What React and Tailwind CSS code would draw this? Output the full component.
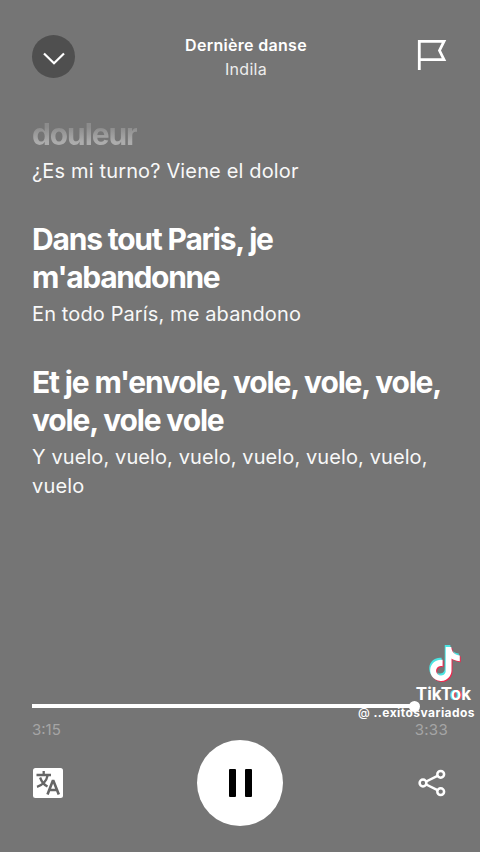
import { SiTiktok } from 'react-icons/si';

const LYRICS = [
  {
    lines: [{ text: 'douleur', spacing: 'tracking-[-1.1px]' }],
    translation: [{ text: '¿Es mi turno? Viene el dolor', spacing: 'tracking-[0.15px]' }],
    past: true,
  },
  {
    lines: [
      { text: 'Dans tout Paris, je', spacing: 'tracking-[-1.2px]' },
      { text: "m'abandonne", spacing: 'tracking-[-1.35px]' },
    ],
    translation: [{ text: 'En todo París, me abandono', spacing: 'tracking-[0.12px]' }],
  },
  {
    lines: [
      { text: "Et je m'envole, vole, vole, vole,", spacing: 'tracking-[-1.17px]' },
      { text: 'vole, vole vole', spacing: 'tracking-[-1.15px]' },
    ],
    translation: [
      { text: 'Y vuelo, vuelo, vuelo, vuelo, vuelo, vuelo,', spacing: 'tracking-[0.1px]' },
      { text: 'vuelo', spacing: 'tracking-[0.2px]' },
    ],
  },
];

const FlagIcon = () => (
  <svg width="30" height="32" viewBox="0 0 30 32" fill="none" stroke="white" strokeWidth="2.8">
    <path d="M2.3 31V2.3H27L22.5 11.5L27 20.7H2.3" />
  </svg>
);

const TranslateIcon = () => (
  <svg width="30" height="30" viewBox="0 0 30 30" fill="none">
    <rect width="30" height="30" rx="2.5" fill="white" />
    <g stroke="#666" strokeWidth="2.3">
      <path d="M3.5 7H18M10.7 3V7M14.8 7C13.5 13 9 17.2 4 18.8M7.1 9.5C8.5 13.5 11 16.8 14.5 18.6" />
      <path d="M14.5 26.5L19.7 13H20.5L25.8 26.5M16.3 22H24" strokeWidth="2.6" />
    </g>
  </svg>
);

const ShareIcon = () => (
  <svg width="28" height="28" viewBox="0 0 28 28" fill="none" stroke="white" strokeWidth="2.5">
    <circle cx="5" cy="14" r="3.4" />
    <circle cx="22.7" cy="5.3" r="3.4" />
    <circle cx="22.7" cy="22.7" r="3.4" />
    <path d="M8.2 12.5L19.5 6.9M8.2 15.5L19.5 21.1" />
  </svg>
);

const Verse = ({ verse }) => (
  <div>
    {verse.lines.map(line => (
      <p
        key={line.text}
        className={`text-[30px] leading-[37.5px] font-bold whitespace-nowrap ${line.spacing} ${verse.past ? 'bg-linear-to-b from-[#8c8c8c] from-30% to-[#acacac] to-70% bg-clip-text text-transparent w-fit' : ''}`}
      >
        {line.text}
      </p>
    ))}
    <div className="mt-[3.5px]">
      {verse.translation.map(line => (
        <p key={line.text} className={`text-xl leading-[29px] whitespace-nowrap text-[#f8f8f8] ${line.spacing}`}>
          {line.text}
        </p>
      ))}
    </div>
  </div>
);

const Watermark = () => (
  <div className="absolute right-[5px] top-[645px] flex flex-col items-end">
    {/* Note with its cyan and red offsets */}
    <div className="relative w-[32px] h-[38px] mr-[14px]">
      <SiTiktok size={34} className="absolute -left-[2px] top-0 text-[#4be5e3]" />
      <SiTiktok size={34} className="absolute left-0 top-[3px] text-[#ef2950]" />
      <SiTiktok size={34} className="absolute -left-px top-[1.5px] text-white" />
    </div>
    <p className="mr-[4px] mt-px text-[17px] leading-[21px] font-bold">
      TikT<span className="[text-shadow:-1px_0_#4be5e3,1px_0_#ef2950]">o</span>k
    </p>
    <p className="-mt-px text-[12px] leading-[17px] font-bold whitespace-nowrap tracking-[0.45px]">
      <span className="font-medium">@</span> ..exitosvariados
    </p>
  </div>
);

export default function App() {
  return (
    <div className="relative w-[480px] h-[852px] overflow-hidden bg-[#757575] text-white font-['Inter',sans-serif] flex flex-col">
      <header className="h-[115.5px] shrink-0 flex items-start justify-between pl-8 pr-[33px] pt-[35px]">
        <button className="size-[43px] rounded-full bg-[#4f4f4f] flex items-center justify-center">
          <svg width="22" height="13" viewBox="0 0 22 13" fill="none" stroke="white" strokeWidth="2.2" className="mt-[3px]">
            <path d="M1 1.5L11 11.3L21 1.5" />
          </svg>
        </button>
        <div className="text-center">
          <h1 className="text-base leading-6 font-semibold -mt-0.5 tracking-[0.3px]">Dernière danse</h1>
          <p className="text-base leading-6 text-[#ededed] tracking-[0.3px]">Indila</p>
        </div>
        <button className="mt-[4px]">
          <FlagIcon />
        </button>
      </header>

      <main className="flex-1 flex flex-col gap-[35.5px] pl-8">
        {LYRICS.map(verse => (
          <Verse key={verse.lines[0].text} verse={verse} />
        ))}
      </main>

      <footer className="h-[152px] shrink-0 px-8">
        {/* Progress */}
        <div className="flex items-center h-3">
          <div className="w-[378px] h-1 bg-white" />
          <div className="size-[11px] -ml-px rounded-full bg-white" />
        </div>
        <div className="flex justify-between text-[15px] leading-5 mt-[8px] text-[#a5a5a5]">
          <span>3:15</span>
          <span className="tracking-[0.3px]">3:33</span>
        </div>

        <div className="flex items-center justify-between h-[85px] pl-px pr-[2px]">
          <TranslateIcon />
          <button className="size-[86px] -ml-px rounded-full bg-white flex items-center justify-center gap-[9px]">
            <span className="w-[7px] h-7 rounded-[1px] bg-black" />
            <span className="w-[7px] h-7 rounded-[1px] bg-black" />
          </button>
          <ShareIcon />
        </div>
      </footer>

      <Watermark />
    </div>
  );
}
